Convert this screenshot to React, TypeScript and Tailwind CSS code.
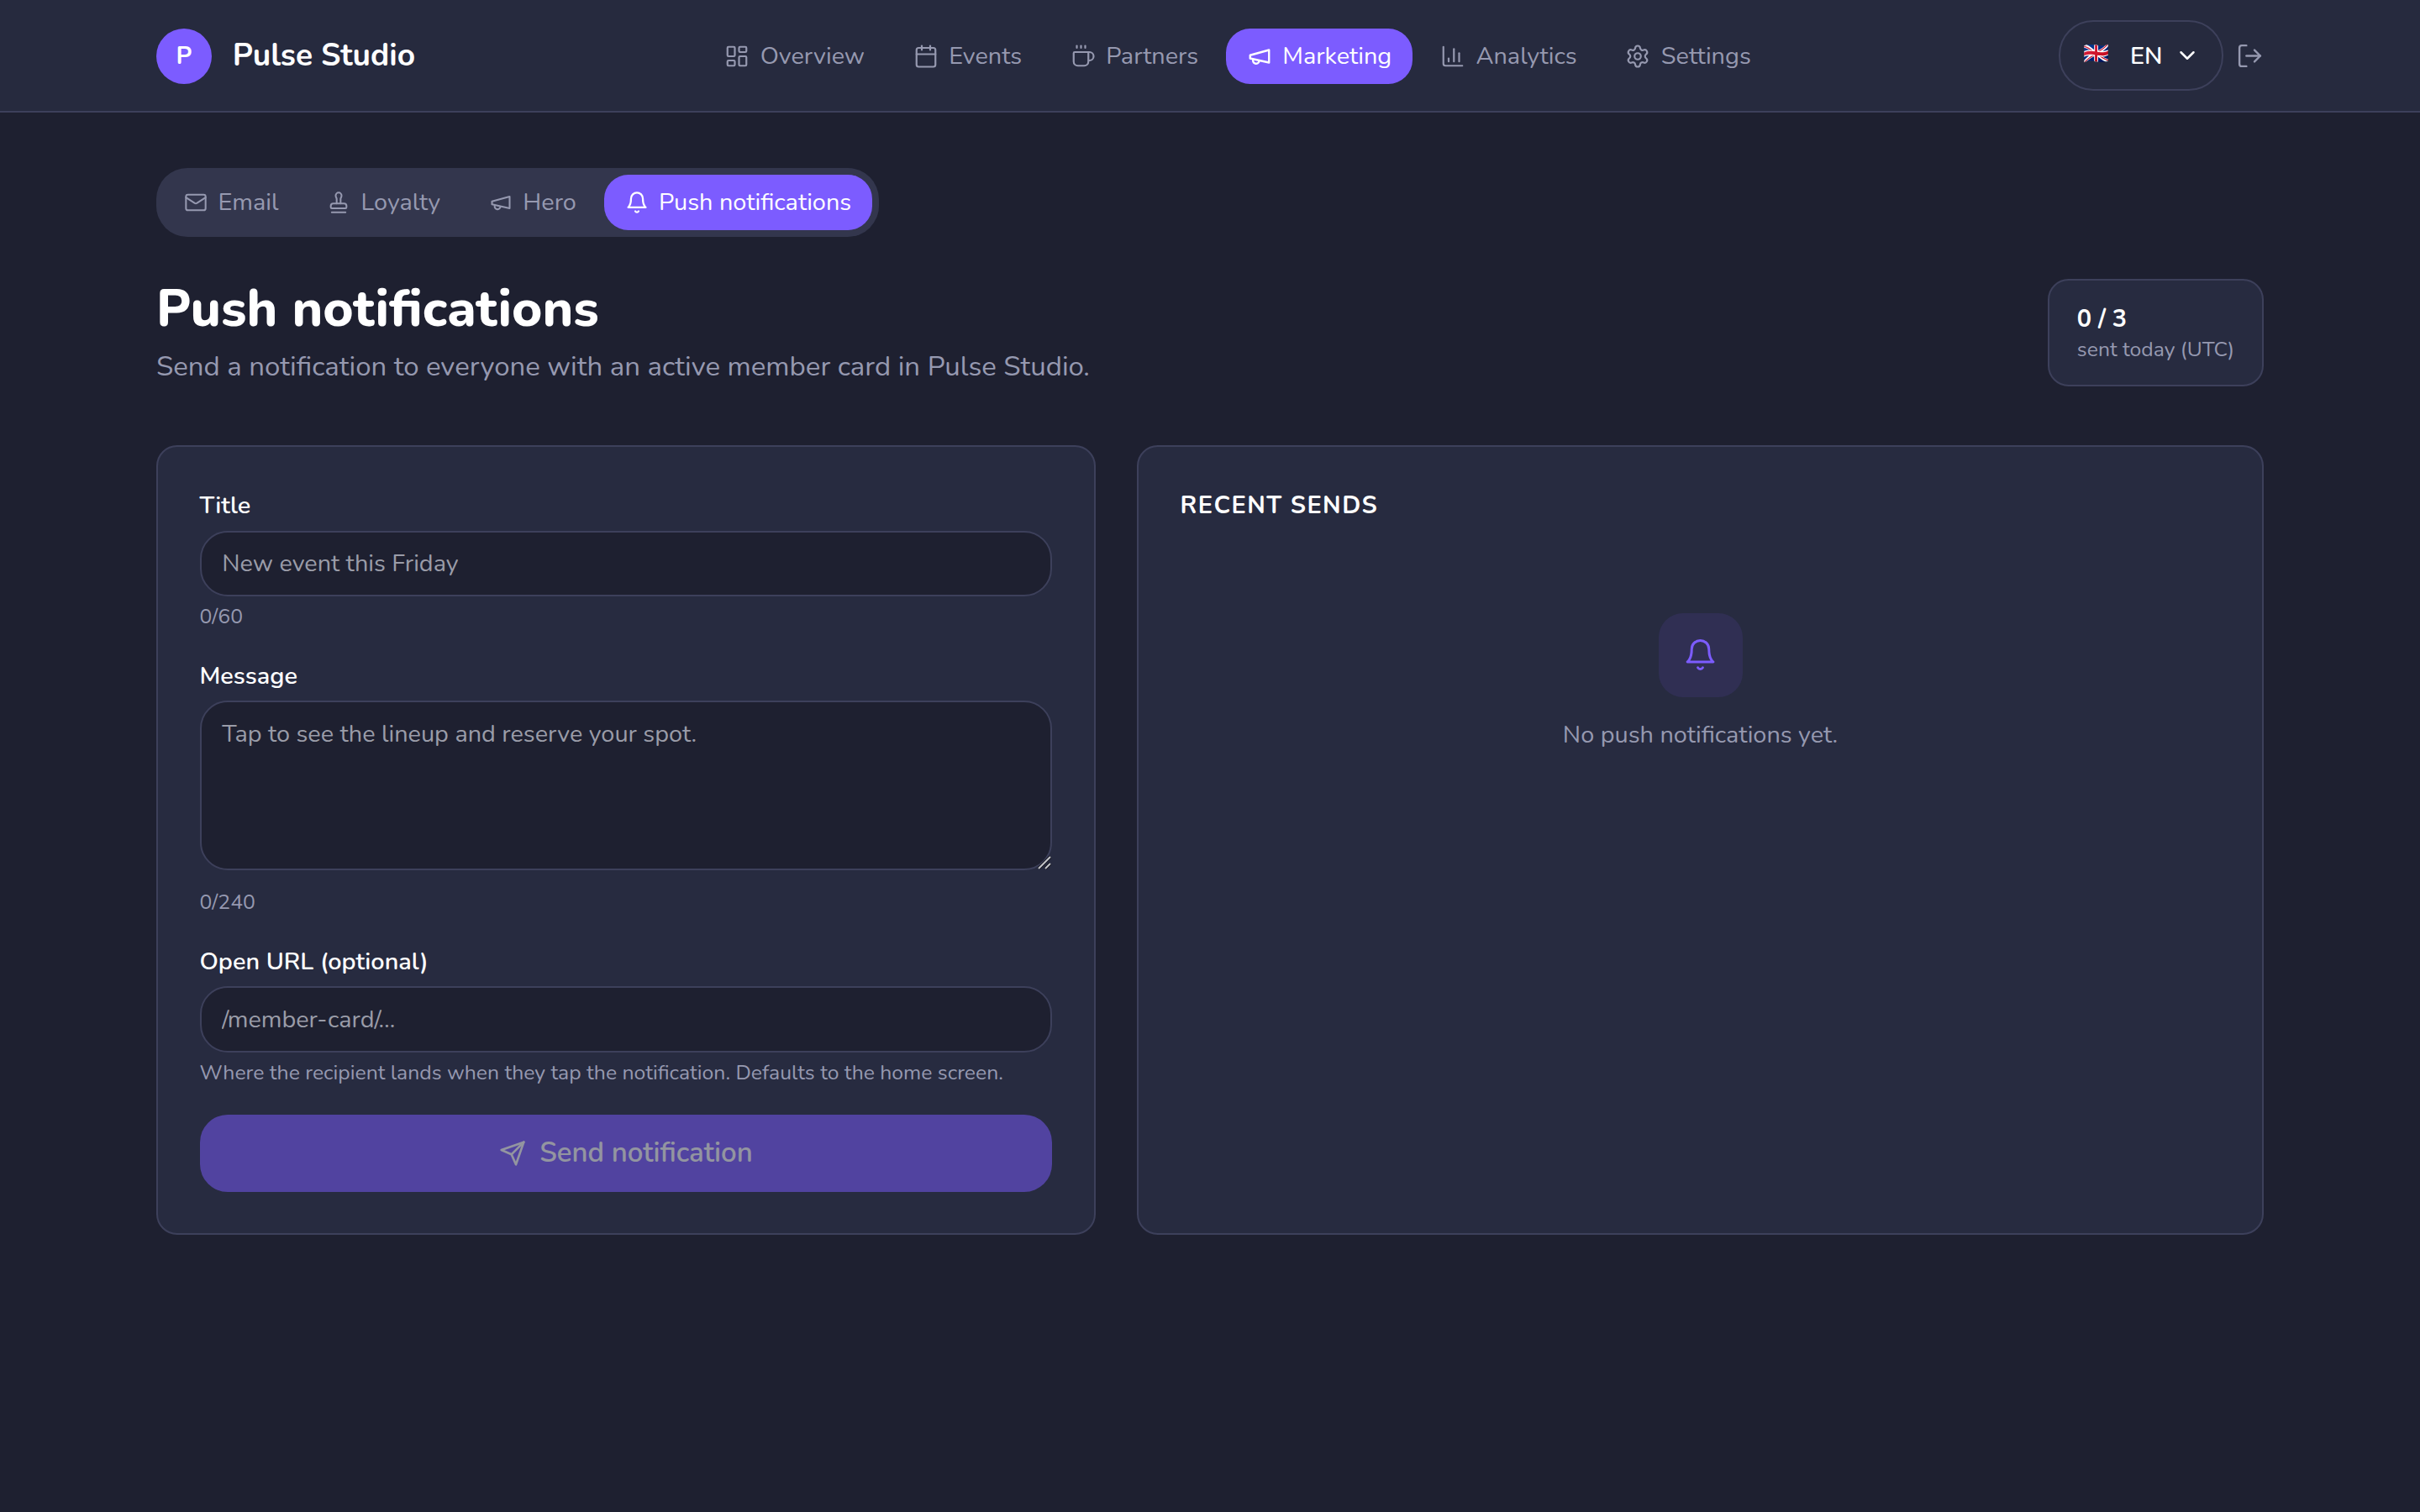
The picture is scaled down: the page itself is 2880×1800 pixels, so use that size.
import React from 'react';
import {
    LayoutDashboard,
    Calendar,
    Coffee,
    ChartColumn,
    Settings,
    Mail,
    Stamp,
    ChevronDown,
    LogOut,
} from 'lucide-react';
import clsx from 'clsx';

interface IconProps {
    size?: number;
    strokeWidth?: number;
    className?: string;
}

const Svg = ({ size = 30, strokeWidth = 1.75, className, children }: IconProps & { children: React.ReactNode }) => (
    <svg
        width={size}
        height={size}
        viewBox="0 0 24 24"
        fill="none"
        stroke="currentColor"
        strokeWidth={strokeWidth}
        strokeLinecap="round"
        strokeLinejoin="round"
        className={className}
    >
        {children}
    </svg>
);

const MegaphoneIcon = (props: IconProps) => (
    <Svg {...props}>
        <path d="m3 11 18-5v12L3 14v-3z" />
        <path d="M11.6 16.8a3 3 0 1 1-5.8-1.6" />
    </Svg>
);

const BellIcon = (props: IconProps) => (
    <Svg {...props}>
        <path d="M6 8a6 6 0 0 1 12 0c0 7 3 9 3 9H3s3-2 3-9" />
        <path d="M10.3 21a1.94 1.94 0 0 0 3.4 0" />
    </Svg>
);

const SendIcon = (props: IconProps) => (
    <Svg {...props}>
        <path d="m22 2-7 20-4-9-9-4Z" />
        <path d="M22 2 11 13" />
    </Svg>
);

interface NavItem {
    label: string;
    icon: React.ComponentType<IconProps>;
    active?: boolean;
}

const navItems: NavItem[] = [
    { label: 'Overview', icon: LayoutDashboard },
    { label: 'Events', icon: Calendar },
    { label: 'Partners', icon: Coffee },
    { label: 'Marketing', icon: MegaphoneIcon, active: true },
    { label: 'Analytics', icon: ChartColumn },
    { label: 'Settings', icon: Settings },
];

const tabs: NavItem[] = [
    { label: 'Email', icon: Mail },
    { label: 'Loyalty', icon: Stamp },
    { label: 'Hero', icon: MegaphoneIcon },
    { label: 'Push notifications', icon: BellIcon, active: true },
];

const NavButton = ({ item, size }: { item: NavItem; size: number }) => {
    const Icon = item.icon;
    return (
        <button
            className={clsx(
                'flex h-8 items-center gap-1.5 rounded-[0.875rem] px-3 text-sm whitespace-nowrap',
                item.active ? 'bg-[#7c5cff] text-white' : 'text-[#9699b0]'
            )}
        >
            <Icon size={size} strokeWidth={item.active ? 1.9 : 1.75} />
            {item.label}
        </button>
    );
};

const Header = () => (
    <header className="border-b-2 border-[#3d405b] bg-[#262a3e]">
        <div className="mx-auto flex h-16 max-w-7xl items-center justify-between px-8">
            <div className="flex items-center gap-3">
                <div className="mt-[2px] flex size-8 items-center justify-center rounded-full bg-[#7c5cff] text-sm font-bold">P</div>
                <span className="text-lg font-bold">Pulse Studio</span>
            </div>
            <nav className="mt-[2px] ml-[2px] flex items-center gap-1">
                {navItems.map((item) => <NavButton key={item.label} item={item} size={30} />)}
            </nav>
            <div className="flex items-center gap-[15px]">
                <button className="flex h-[84px] w-[196px] items-center rounded-[1.25rem] border-2 border-[#3d405b] pl-[27px] text-sm font-semibold">
                    <span className="w-[56px] pb-[4px] text-left text-[25px] leading-none">🇬🇧</span>
                    <span className="mt-[2px]">EN</span>
                    <ChevronDown size={30} className="ml-[15px]" />
                </button>
                <LogOut size={33} strokeWidth={1.75} className="text-[#9699b0]" />
            </div>
        </div>
    </header>
);

const fieldClass =
    'block w-full resize-none rounded-2xl border-2 border-[#3d405b] bg-[#1e2030] px-3 py-2 text-sm text-white placeholder:text-[#9a9ca8] outline-none';

interface FieldProps {
    label: string;
    hint: string;
    hintClass?: string;
    children: React.ReactNode;
}

const Field = ({ label, hint, hintClass = 'mt-1', children }: FieldProps) => (
    <div>
        <label className="mb-[9px] block text-sm font-semibold">{label}</label>
        {children}
        <p className={clsx('text-xs text-[#9699b0]', hintClass)}>{hint}</p>
    </div>
);

const PushForm = () => (
    <section className="space-y-4 rounded-xl border-2 border-[#3d405b] bg-[#272b40] p-6">
        <Field label="Title" hint="0/60">
            <input className={fieldClass} placeholder="New event this Friday" />
        </Field>
        <Field label="Message" hint="0/240" hintClass="mt-[22px]">
            <div className="relative">
                <textarea rows={4} className={fieldClass} placeholder="Tap to see the lineup and reserve your spot." />
                {/* resize grip */}
                <svg className="absolute right-px bottom-px" width="16" height="16" viewBox="0 0 16 16" fill="none">
                    <path d="M1 15 15 1M9 15l6-6" stroke="#15161f" strokeWidth="4" />
                    <path d="M1 15 15 1M9 15l6-6" stroke="#c4c5ca" strokeWidth="2" />
                </svg>
            </div>
        </Field>
        <Field label="Open URL (optional)" hint="Where the recipient lands when they tap the notification. Defaults to the home screen.">
            <input className={fieldClass} placeholder="/member-card/…" />
        </Field>
        <button
            disabled
            className="flex h-[92px] w-full items-center justify-center gap-2 rounded-2xl bg-[#7c5cff] font-semibold text-white opacity-50"
        >
            <SendIcon size={32} strokeWidth={2} />
            Send notification
        </button>
    </section>
);

const RecentSends = () => (
    <section className="rounded-xl border-2 border-[#3d405b] bg-[#272b40] p-6">
        <h2 className="mb-3 text-sm font-bold tracking-wider uppercase">Recent sends</h2>
        <div className="flex flex-col items-center py-10">
            <div className="flex size-[100px] items-center justify-center rounded-[0.875rem] bg-[#7c5cff]/10 text-[#7c5cff]">
                <BellIcon size={41} />
            </div>
            <p className="mt-[24px] text-sm text-[#9699b0]">No push notifications yet.</p>
        </div>
    </section>
);

export default function App() {
    return (
        <div className="min-h-screen bg-[#1e2030] font-['Nunito',sans-serif] text-white">
            <style>{'html { font-size: 33px; }'}</style>
            <Header />
            <main className="mx-auto max-w-7xl px-8 py-8">
                <div className="mb-[50px] inline-flex gap-1 rounded-[1.125rem] bg-[#33364d] px-1 py-[8px] align-top">
                    {tabs.map((tab) => <NavButton key={tab.label} item={tab} size={28} />)}
                </div>
                <div className="mb-8 flex items-start justify-between">
                    <div className="pb-[2px]">
                        <h1 className="-mt-px text-3xl font-extrabold">Push notifications</h1>
                        <p className="mt-[7px] text-[#9699b0]">
                            Send a notification to everyone with an active member card in Pulse Studio.
                        </p>
                    </div>
                    <div className="rounded-xl border-2 border-[#3d405b] bg-[#272b40] px-4 py-3">
                        <p className="text-sm font-bold">0 / 3</p>
                        <p className="text-xs text-[#9699b0]">sent today (UTC)</p>
                    </div>
                </div>
                <div className="grid grid-cols-[1fr_1.2fr] gap-6">
                    <PushForm />
                    <RecentSends />
                </div>
            </main>
        </div>
    );
}
